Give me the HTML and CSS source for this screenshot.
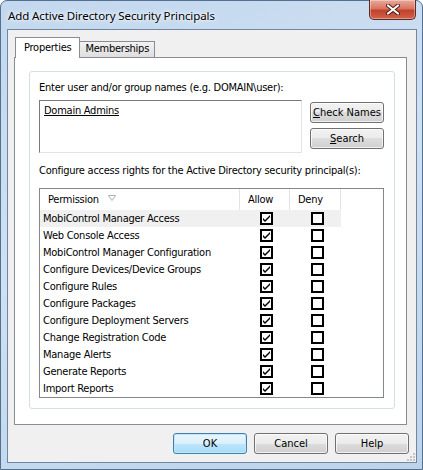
FILE: index.html
```html
<!doctype html>
<html lang="en">
 <head>
  <meta charset="UTF-8">
  <title>Add Active Directory Security Principals</title>
  <link rel="stylesheet" href="styles.css">
 </head>
 <body>
  <div class="window">
   <div class="titlebar">
    <span class="title">Add Active Directory Security Principals</span>
    <button class="close-btn" title="Close">
     <svg width="14" height="11" viewBox="0 0 14 11">
      <path d="M2 1.5 L12 9.5 M12 1.5 L2 9.5" stroke="#4a1a14" stroke-width="4" stroke-linecap="round"/>
      <path d="M2 1.5 L12 9.5 M12 1.5 L2 9.5" stroke="#fff" stroke-width="2.2" stroke-linecap="round"/>
     </svg>
    </button>
   </div>

   <div class="client">
    <div class="tabs">
     <div class="tab active">Properties</div>
     <div class="tab">Memberships</div>
    </div>

    <div class="panel">
     <div class="group">
      <div class="label">Enter user and/or group names (e.g. DOMAIN\user):</div>
      <div class="names-row">
       <div class="names-box"><u>Domain Admins</u></div>
       <div class="side-buttons">
        <button class="btn"><u>C</u>heck Names</button>
        <button class="btn"><u>S</u>earch</button>
       </div>
      </div>

      <div class="label label-rights">Configure access rights for the Active Directory security principal(s):</div>

      <div class="listview" id="permList">
       <div class="lv-header">
        <div class="lv-col">Permission
         <svg class="sort-arrow" width="8" height="6" viewBox="0 0 8 6"><path d="M0.5 0.5 H7.5 L4 5.5 Z" fill="none" stroke="#a9b3c2"/></svg>
        </div>
        <div class="lv-col">Allow</div>
        <div class="lv-col">Deny</div>
        <div class="lv-col lv-filler"></div>
       </div>
      </div>
     </div>
    </div>

    <div class="footer">
     <button class="btn btn-wide btn-default">OK</button>
     <button class="btn btn-wide">Cancel</button>
     <button class="btn btn-wide">Help</button>
    </div>

    <svg class="grip" width="10" height="10" viewBox="0 0 10 10">
     <g fill="#c5c5c5">
      <rect x="7" y="1" width="2" height="2"/>
      <rect x="4" y="4" width="2" height="2"/>
      <rect x="7" y="4" width="2" height="2"/>
      <rect x="1" y="7" width="2" height="2"/>
      <rect x="4" y="7" width="2" height="2"/>
      <rect x="7" y="7" width="2" height="2"/>
     </g>
    </svg>
   </div>
  </div>

  <script>
    var permissions = [
      "MobiControl Manager Access",
      "Web Console Access",
      "MobiControl Manager Configuration",
      "Configure Devices/Device Groups",
      "Configure Rules",
      "Configure Packages",
      "Configure Deployment Servers",
      "Change Registration Code",
      "Manage Alerts",
      "Generate Reports",
      "Import Reports"
    ];

    function checkbox(checked) {
      var mark = checked ? '<path d="M3 6 L5 8 L10 3 L10 5 L5 10 L3 8 Z" fill="#000"/>' : '';
      return '<svg width="13" height="13" viewBox="0 0 13 13">' +
        '<rect x="1" y="1" width="11" height="11" fill="#fff" stroke="#000" stroke-width="2"/>' +
        mark + '</svg>';
    }

    var list = document.getElementById("permList");
    permissions.forEach(function (name, i) {
      var row = document.createElement("div");
      row.className = "lv-row" + (i === 0 ? " hot" : "");
      row.innerHTML =
        '<div class="lv-cell">' + name + '</div>' +
        '<div class="lv-cell lv-check">' + checkbox(true) + '</div>' +
        '<div class="lv-cell lv-check">' + checkbox(false) + '</div>';
      list.appendChild(row);
    });
  </script>
 </body>
</html>
```

FILE: styles.css
```css
body {
  margin: 0;
  font-family: "DejaVu Sans Condensed", "Liberation Sans", sans-serif;
  font-size: 11px;
  letter-spacing: -0.25px;
  color: #000;
  background: #fff;
}

.window {
  width: 423px;
  height: 470px;
  box-sizing: border-box;
  border: 1px solid #52708f;
  border-radius: 7px 7px 0 0;
  background: linear-gradient(160deg, #c3d8ee 0%, #cfe0f2 45%, #bcd3eb 100%);
  padding: 0 5px 6px 6px;
  display: flex;
  flex-direction: column;
}

/* title bar */
.titlebar {
  height: 28px;
  margin: 0 -5px 0 -6px;
  display: flex;
  align-items: flex-start;
}

.title {
  padding: 7px 0 0 7px;
  font-family: "Noto Sans", sans-serif;
  font-size: 11.5px;
  letter-spacing: -0.1px;
  line-height: 16px;
  text-shadow: 0 0 6px #fff, 0 0 3px #fff;
}

.close-btn {
  margin: -1px 6px 0 auto;
  width: 47px;
  height: 20px;
  padding: 0;
  border: 1px solid #5b2a22;
  border-top: none;
  border-radius: 0 0 5px 5px;
  background: linear-gradient(#e9a99b 0%, #d9755f 45%, #c4412b 55%, #d0634b 100%);
  box-shadow: inset 0 0 0 1px rgba(255, 255, 255, 0.35);
  display: flex;
  align-items: center;
  justify-content: center;
}

/* client area */
.client {
  position: relative;
  flex: 1;
  border: 1px solid #6f87a3;
  background: #f0f0f0;
  display: flex;
  flex-direction: column;
}

.tabs {
  display: flex;
  align-items: flex-end;
  margin: 7px 0 0 7px;
  height: 20px;
}

.tab {
  box-sizing: border-box;
  height: 16px;
  padding: 0 5px 0 5px;
  line-height: 14px;
  border: 1px solid #898c95;
  border-left: none;
  border-bottom: none;
  background: linear-gradient(#f2f2f2, #dedede);
}

.tab.active {
  height: 21px;
  margin-bottom: -1px;
  padding: 0 8px;
  line-height: 19px;
  border-left: 1px solid #898c95;
  background: #fff;
  position: relative;
}

.panel {
  flex: 1;
  margin: 0 9px 0 6px;
  border: 1px solid #898c95;
  background: #fff;
  padding: 13px 11px 15px 14px;
  display: flex;
}

.group {
  flex: 1;
  border: 1px solid #d5dfe5;
  border-radius: 3px;
  padding: 8px 0 0 9px;
}

.label {
  line-height: 15px;
  white-space: nowrap;
}

.names-row {
  display: flex;
  align-items: flex-start;
  gap: 8px;
  margin-top: 5px;
}

.names-box {
  box-sizing: border-box;
  width: 263px;
  height: 53px;
  border: 1px solid;
  border-color: #7a7a7a #e3e3e3 #e3e3e3 #7a7a7a;
  padding: 2px 4px;
  line-height: 15px;
}

.side-buttons {
  display: flex;
  flex-direction: column;
  gap: 5px;
  margin-top: 2px;
}

.btn {
  box-sizing: border-box;
  width: 74px;
  height: 21px;
  padding: 0;
  font: inherit;
  color: #000;
  white-space: nowrap;
  border: 1px solid #707070;
  border-radius: 3px;
  background: linear-gradient(#f2f2f2 0%, #ebebeb 50%, #dddddd 50%, #cfcfcf 100%);
  box-shadow: inset 0 0 0 1px rgba(255, 255, 255, 0.7);
}

.btn-default {
  border-color: #3c7fb1;
  background: linear-gradient(#eaf6fd 0%, #d9f0fc 50%, #bee6fd 50%, #a7d9f5 100%);
  box-shadow: inset 0 0 0 1px #c5e6f9;
}

.label-rights {
  margin-top: 10px;
}

/* list view */
.listview {
  box-sizing: border-box;
  width: 345px;
  height: 210px;
  margin-top: 10px;
  border: 1px solid #828790;
  background: #fff;
}

.lv-header {
  display: grid;
  grid-template-columns: 200px 50px 51px 1fr;
  height: 21px;
}

.lv-col {
  box-sizing: border-box;
  border-right: 1px solid #e1e3e6;
  padding-left: 8px;
  line-height: 20px;
  display: flex;
  align-items: center;
}

.lv-col.lv-filler {
  border-right: none;
}

.sort-arrow {
  margin-left: 9px;
  margin-top: -3px;
}

.lv-row {
  display: grid;
  grid-template-columns: 200px 50px 51px;
  width: 301px;
  height: 17px;
  line-height: 17px;
}

.lv-row.hot {
  background: #f0f0f0;
}

.lv-cell {
  padding-left: 3px;
  white-space: nowrap;
}

.lv-check {
  display: flex;
  align-items: center;
  justify-content: center;
  padding-left: 3px;
}

/* bottom buttons */
.footer {
  display: flex;
  justify-content: flex-end;
  gap: 7px;
  padding: 8px 7px 8px 0;
}

.grip {
  position: absolute;
  right: 0;
  bottom: 0;
}
```
